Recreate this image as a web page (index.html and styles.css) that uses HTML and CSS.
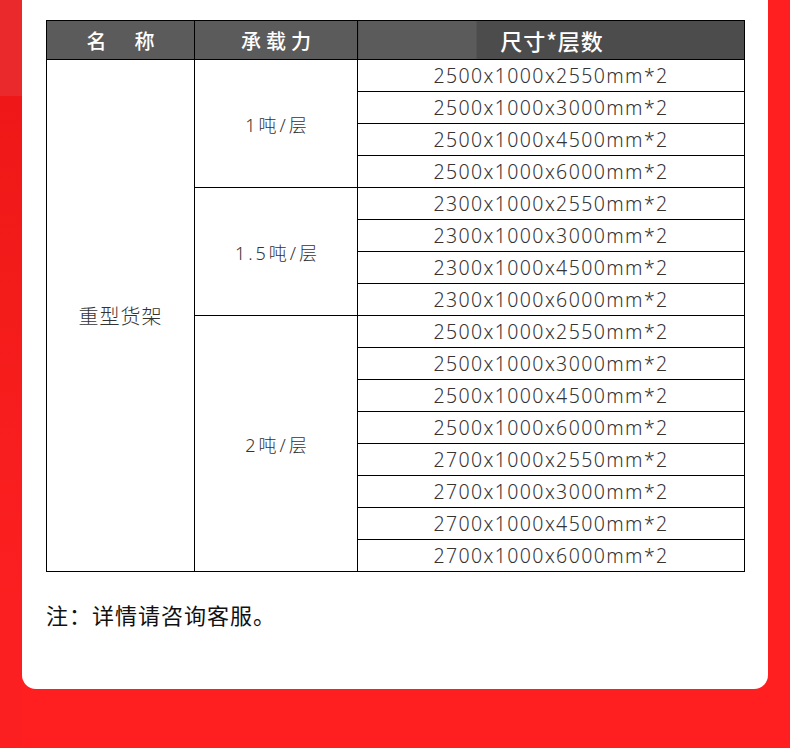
FILE: index.html
```html
<!DOCTYPE html>
<html lang="zh">
<head>
<meta charset="utf-8">
<link rel="stylesheet" href="styles.css">
</head>
<body>
<div class="page">
  <div class="side-tint"></div>
  <div class="card">
    <table class="spec">
      <colgroup>
        <col class="c1"><col class="c2"><col class="c3">
      </colgroup>
      <thead>
        <tr>
          <th class="h-name">名<span class="gap"></span>称</th>
          <th class="h-load">承载力</th>
          <th class="h-size">尺寸*层数</th>
        </tr>
      </thead>
      <tbody>
        <tr><td rowspan="16" class="name">重型货架</td><td rowspan="4" class="load">1吨/层</td><td class="size">2500x1000x2550mm*2</td></tr>
        <tr><td class="size">2500x1000x3000mm*2</td></tr>
        <tr><td class="size">2500x1000x4500mm*2</td></tr>
        <tr><td class="size">2500x1000x6000mm*2</td></tr>
        <tr><td rowspan="4" class="load">1.5吨/层</td><td class="size">2300x1000x2550mm*2</td></tr>
        <tr><td class="size">2300x1000x3000mm*2</td></tr>
        <tr><td class="size">2300x1000x4500mm*2</td></tr>
        <tr><td class="size">2300x1000x6000mm*2</td></tr>
        <tr><td rowspan="8" class="load">2吨/层</td><td class="size">2500x1000x2550mm*2</td></tr>
        <tr><td class="size">2500x1000x3000mm*2</td></tr>
        <tr><td class="size">2500x1000x4500mm*2</td></tr>
        <tr><td class="size">2500x1000x6000mm*2</td></tr>
        <tr><td class="size">2700x1000x2550mm*2</td></tr>
        <tr><td class="size">2700x1000x3000mm*2</td></tr>
        <tr><td class="size">2700x1000x4500mm*2</td></tr>
        <tr><td class="size">2700x1000x6000mm*2</td></tr>
      </tbody>
    </table>
    <p class="note">注：详情请咨询客服。</p>
  </div>
</div>
</body>
</html>
```
FILE: styles.css
```css
html, body {
  margin: 0;
  padding: 0;
}
body {
  background: #ff1f21;
  font-family: "Noto Sans", "Noto Sans CJK SC", sans-serif;
}
.page {
  position: relative;
  width: 790px;
  height: 748px;
  background: #ff1f21;
  overflow: hidden;
}
.side-tint {
  position: absolute;
  left: 0;
  top: 0;
  width: 22px;
  height: 748px;
  background: linear-gradient(to bottom, #e9292b 0, #e9292b 96px, #ef1717 96px, #f41b1b 300px, #fc1f21 600px);
}
.card {
  position: relative;
  margin: 0 22px;
  height: 689px;
  box-sizing: border-box;
  padding: 20px 24px 0;
  background: #ffffff;
  border-radius: 0 0 14px 14px;
  display: flex;
  flex-direction: column;
}
.spec {
  width: 698px;
  border-collapse: collapse;
  table-layout: fixed;
  border: 1px solid #000;
}
.c1 { width: 148px; }
.c2 { width: 163px; }
.c3 { width: 387px; }
.spec th {
  height: 38px;
  padding: 0;
  border: 1px solid #000;
  background: #5b5b5b;
  color: #ffffff;
  font-family: "Noto Sans CJK SC", sans-serif;
  font-weight: 500;
  font-size: 20px;
  text-align: center;
  vertical-align: middle;
}
.h-name .gap {
  display: inline-block;
  width: 28px;
}
.h-load {
  letter-spacing: 5px;
  text-indent: 5px;
}
.spec th.h-size {
  background: linear-gradient(to right, #5b5b5b 118px, #4c4c4c 118px);
  font-size: 22px;
  letter-spacing: 1px;
  padding-left: 2px;
}
.spec td {
  padding: 0;
  border: 1px solid #000;
  color: #333333;
  text-align: center;
  vertical-align: middle;
  font-weight: 300;
}
.size {
  height: 31px;
  font-size: 19.5px;
  letter-spacing: 1.4px;
  line-height: 31px;
}
.load {
  font-size: 18px;
  letter-spacing: 3px;
  text-indent: 3px;
}
.name {
  font-size: 20px;
  letter-spacing: 1px;
  font-family: "Noto Sans CJK SC", sans-serif;
}
.note {
  margin: 26px 0 0;
  font-family: "Noto Sans CJK SC", sans-serif;
  font-size: 22px;
  letter-spacing: 1px;
  color: #111111;
}
```
